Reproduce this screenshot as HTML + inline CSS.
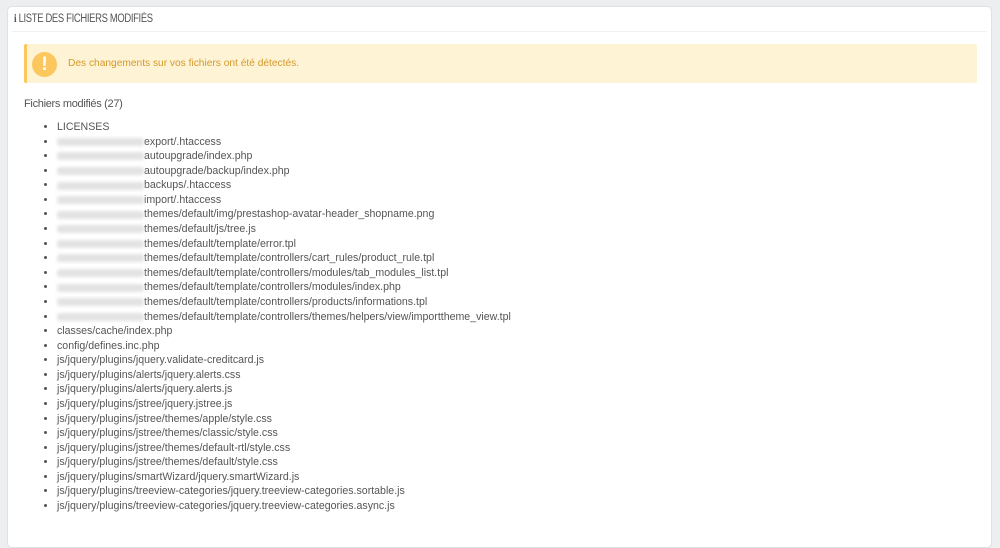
<!DOCTYPE html><html><head><meta charset="utf-8"><style>
body{margin:0;background:#eceef0;width:1000px;height:533px;overflow:hidden;font-family:"Liberation Sans",sans-serif}
.panel{position:absolute;left:7px;top:6px;width:983px;height:540px;background:#fff;border:1px solid #dfe2e4;border-radius:5px}
.hd{position:absolute;left:4px;right:4px;top:0;height:24px;border-bottom:1px solid #eef0f1;font-size:11.5px;color:#555;line-height:24px;padding-left:2px;letter-spacing:-0.4px}
.hd i{display:inline-block;transform:scaleX(0.82);transform-origin:left;font-style:normal}
.al{position:absolute;left:16px;top:37px;width:950px;height:39px;background:#fff3d6;border-left:3px solid #fcc75e;border-radius:2px}
.ic{position:absolute;left:5px;top:8px;width:25px;height:25px;border-radius:50%;background:#fcc75e;color:#fff;font-weight:bold;font-size:19px;text-align:center;line-height:25px}
.al span{position:absolute;left:41px;top:14px;font-size:10.2px;color:#d39a2a}
h3{position:absolute;left:16px;top:91px;margin:0;font-size:11px;font-weight:normal;color:#555;letter-spacing:-0.3px}
ul{position:absolute;left:36px;top:113px;margin:0;padding:0 0 0 13px;font-size:10.6px;color:#555;line-height:14.58px}
li{white-space:nowrap}
b.x{display:inline-block;width:87px;height:8px;background:#e3e3e3;filter:blur(1.5px);vertical-align:middle;border-radius:3px}
</style></head><body>
<div class="panel">
<div class="hd"><i><b style="font-family:serif">i</b> LISTE DES FICHIERS MODIFIÉS</i></div>
<div class="al"><div class="ic">!</div><span>Des changements sur vos fichiers ont été détectés.</span></div>
<h3>Fichiers modifiés (27)</h3>
<ul>
<li>LICENSES</li>
<li><b class="x"></b>export/.htaccess</li>
<li><b class="x"></b>autoupgrade/index.php</li>
<li><b class="x"></b>autoupgrade/backup/index.php</li>
<li><b class="x"></b>backups/.htaccess</li>
<li><b class="x"></b>import/.htaccess</li>
<li><b class="x"></b>themes/default/img/prestashop-avatar-header_shopname.png</li>
<li><b class="x"></b>themes/default/js/tree.js</li>
<li><b class="x"></b>themes/default/template/error.tpl</li>
<li><b class="x"></b>themes/default/template/controllers/cart_rules/product_rule.tpl</li>
<li><b class="x"></b>themes/default/template/controllers/modules/tab_modules_list.tpl</li>
<li><b class="x"></b>themes/default/template/controllers/modules/index.php</li>
<li><b class="x"></b>themes/default/template/controllers/products/informations.tpl</li>
<li><b class="x"></b>themes/default/template/controllers/themes/helpers/view/importtheme_view.tpl</li>
<li>classes/cache/index.php</li>
<li>config/defines.inc.php</li>
<li>js/jquery/plugins/jquery.validate-creditcard.js</li>
<li>js/jquery/plugins/alerts/jquery.alerts.css</li>
<li>js/jquery/plugins/alerts/jquery.alerts.js</li>
<li>js/jquery/plugins/jstree/jquery.jstree.js</li>
<li>js/jquery/plugins/jstree/themes/apple/style.css</li>
<li>js/jquery/plugins/jstree/themes/classic/style.css</li>
<li>js/jquery/plugins/jstree/themes/default-rtl/style.css</li>
<li>js/jquery/plugins/jstree/themes/default/style.css</li>
<li>js/jquery/plugins/smartWizard/jquery.smartWizard.js</li>
<li>js/jquery/plugins/treeview-categories/jquery.treeview-categories.sortable.js</li>
<li>js/jquery/plugins/treeview-categories/jquery.treeview-categories.async.js</li>
</ul>
</div>
</body></html>
